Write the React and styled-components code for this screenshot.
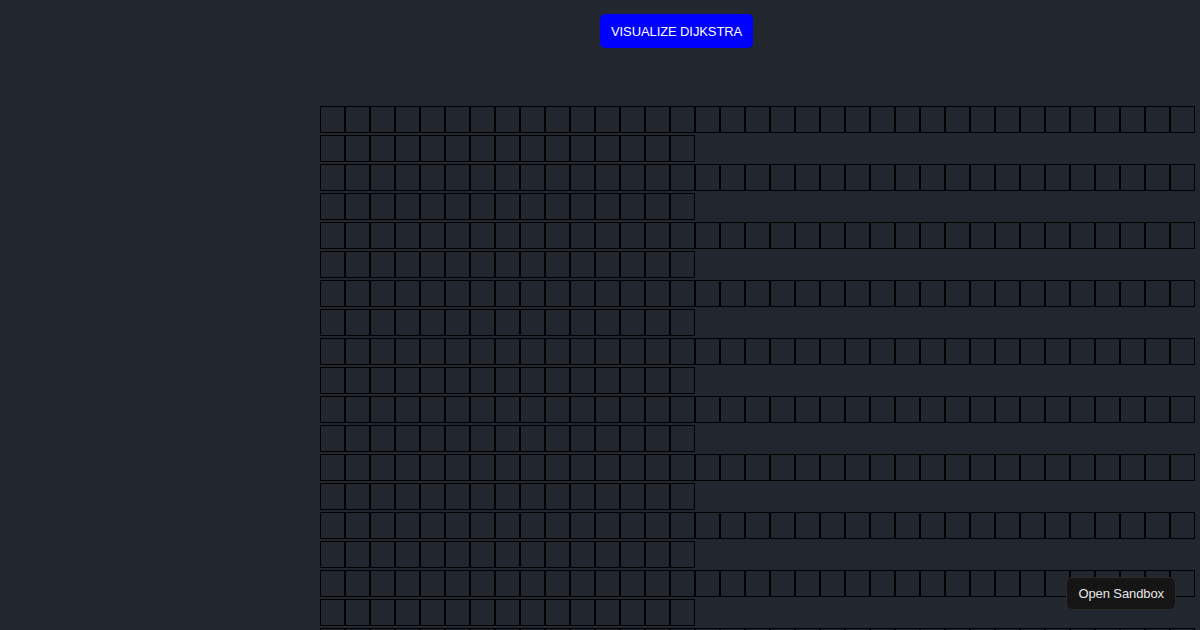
import React from "react";
import styled, { createGlobalStyle } from "styled-components";

const Global = createGlobalStyle`
  html, body { margin: 0; padding: 0; background: #22272f; overflow: hidden; }
  body { font-family: "Liberation Sans", Arial, sans-serif; }
`;

const Page = styled.div`
  display: flex;
  flex-direction: column;
  width: 1200px;
  height: 630px;
  overflow: hidden;
  background: #22272f;
`;

const Toolbar = styled.div`
  display: flex;
  padding: 14px 0 0 600px;
  height: 34px;
`;

const VisualizeButton = styled.button`
  height: 34px;
  padding: 0 11px;
  background: #0000ff;
  color: #ffffff;
  border: none;
  border-radius: 5px;
  font-family: "Liberation Sans", Arial, sans-serif;
  font-size: 13px;
  letter-spacing: -0.1px;
  cursor: pointer;
`;

const Grid = styled.div`
  display: flex;
  flex-direction: column;
  row-gap: 2px;
  margin: 58px 0 0 320px;
`;

const Row = styled.div`
  display: flex;
  flex-wrap: wrap;
  row-gap: 2px;
  width: 877px;
`;

const Node = styled.div`
  box-sizing: border-box;
  width: 25px;
  height: 27px;
  border: 1px solid #000000;
  background: #22272f;
`;

const SandboxButton = styled.button`
  position: fixed;
  right: 24px;
  bottom: 20px;
  height: 33px;
  padding: 0 11px;
  background: #151515;
  color: #e6e6e6;
  border: 1px solid #2b2b2b;
  border-radius: 6px;
  font-family: "Liberation Sans", Arial, sans-serif;
  font-size: 13px;
  letter-spacing: -0.1px;
`;

const ROWS = 20;
const COLS = 50;

export default function App() {
  return (
    <>
      <Global />
      <Page>
        <Toolbar>
          <VisualizeButton>VISUALIZE DIJKSTRA</VisualizeButton>
        </Toolbar>
        <Grid>
          {Array.from({ length: ROWS }, (_, r) => (
            <Row key={r}>
              {Array.from({ length: COLS }, (_, c) => (
                <Node key={c} />
              ))}
            </Row>
          ))}
        </Grid>
      </Page>
      <SandboxButton>Open Sandbox</SandboxButton>
    </>
  );
}
